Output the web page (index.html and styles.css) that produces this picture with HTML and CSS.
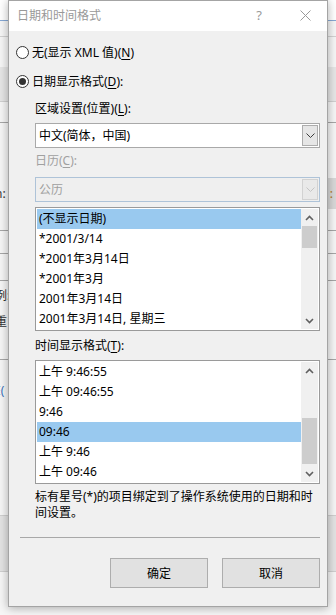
FILE: index.html
```html
<!DOCTYPE html>
<html lang="zh-CN">
<head>
<meta charset="utf-8">
<title>日期和时间格式</title>
<link rel="stylesheet" href="styles.css">
</head>
<body>
<div class="backdrop">
  <div class="bg-row bg-head"></div>
  <div class="bg-row bg-tabs"></div>
  <div class="bg-row bg-gap"></div>
  <div class="bg-row bg-band"></div>
  <div class="bg-row bg-r5"></div>
  <div class="bg-row bg-r6"></div>
  <div class="bg-row bg-r7"><span class="bg-glyph">n:</span><span class="bg-field">:</span></div>
  <div class="bg-row bg-r8"></div>
  <div class="bg-row bg-r9"></div>
  <div class="bg-row bg-r10"></div>
  <div class="bg-row bg-r11"><span class="bg-glyph bg-stack"><span>例:</span><span>重</span></span></div>
  <div class="bg-row bg-r12"><span class="bg-glyph bg-blue">E(</span></div>
  <div class="bg-row bg-band2"></div>
  <div class="bg-row bg-rest"></div>
</div>

<div class="dialog">
  <div class="titlebar">
    <span class="title-text">日期和时间格式</span>
    <span class="tb-help">?</span>
    <span class="tb-close">
      <svg width="11" height="11" viewBox="0 0 11 11"><path d="M0.5 0.5 L10.5 10.5 M10.5 0.5 L0.5 10.5" stroke="#9a9a9a" stroke-width="1" fill="none"/></svg>
    </span>
  </div>

  <div class="content">
    <div class="radio-row row-first">
      <span class="radio"></span>
      <span>无(显示 XML 值)(<u>N</u>)</span>
    </div>
    <div class="radio-row row-second">
      <span class="radio checked"><span class="dot"></span></span>
      <span>日期显示格式(<u>D</u>):</span>
    </div>

    <div class="group">
      <div class="label label-locale">区域设置(位置)(<u>L</u>):</div>
      <div class="combo">
        <span class="combo-text">中文(简体，中国)</span>
        <span class="combo-btn">
          <svg width="9" height="5" viewBox="0 0 9 5"><path d="M0.5 0.5 L4.5 4.5 L8.5 0.5" stroke="#3c3c3c" stroke-width="1" fill="none"/></svg>
        </span>
      </div>

      <div class="label label-disabled">日历(<u>C</u>):</div>
      <div class="combo combo-disabled">
        <span class="combo-text">公历</span>
        <span class="combo-btn">
          <svg width="9" height="5" viewBox="0 0 9 5"><path d="M0.5 0.5 L4.5 4.5 L8.5 0.5" stroke="#c4c4c4" stroke-width="1" fill="none"/></svg>
        </span>
      </div>

      <div class="list list-date">
        <div class="items">
          <div class="item selected">(不显示日期)</div>
          <div class="item">*2001/3/14</div>
          <div class="item">*2001年3月14日</div>
          <div class="item">*2001年3月</div>
          <div class="item">2001年3月14日</div>
          <div class="item">2001年3月14日, 星期三</div>
        </div>
        <div class="scrollbar">
          <span class="sb-arrow">
            <svg width="9" height="6" viewBox="0 0 9 6"><path d="M1 5 L4.5 1.5 L8 5" stroke="#606060" stroke-width="1.6" fill="none"/></svg>
          </span>
          <span class="sb-track"><span class="thumb thumb-date"></span></span>
          <span class="sb-arrow">
            <svg width="9" height="6" viewBox="0 0 9 6"><path d="M1 1 L4.5 4.5 L8 1" stroke="#606060" stroke-width="1.6" fill="none"/></svg>
          </span>
        </div>
      </div>

      <div class="label label-time">时间显示格式(<u>T</u>):</div>
      <div class="list list-time">
        <div class="items">
          <div class="item">上午 9:46:55</div>
          <div class="item">上午 09:46:55</div>
          <div class="item">9:46</div>
          <div class="item selected">09:46</div>
          <div class="item">上午 9:46</div>
          <div class="item">上午 09:46</div>
        </div>
        <div class="scrollbar">
          <span class="sb-arrow">
            <svg width="9" height="6" viewBox="0 0 9 6"><path d="M1 5 L4.5 1.5 L8 5" stroke="#606060" stroke-width="1.6" fill="none"/></svg>
          </span>
          <span class="sb-track"><span class="thumb thumb-time"></span></span>
          <span class="sb-arrow">
            <svg width="9" height="6" viewBox="0 0 9 6"><path d="M1 1 L4.5 4.5 L8 1" stroke="#606060" stroke-width="1.6" fill="none"/></svg>
          </span>
        </div>
      </div>

      <p class="note">标有星号(*)的项目绑定到了操作系统使用的日期和时间设置。</p>
    </div>

    <div class="separator"></div>

    <div class="buttons">
      <button class="btn" type="button">确定</button>
      <button class="btn" type="button">取消</button>
    </div>
  </div>
</div>
</body>
</html>
```

FILE: styles.css
```css
* { box-sizing: border-box; }

html, body { margin: 0; padding: 0; }

body {
  width: 336px;
  height: 615px;
  overflow: hidden;
  position: relative;
  background: #f6f6f6;
  font-family: "Noto Sans", "Noto Sans CJK SC", sans-serif;
  font-size: 12px;
  color: #000;
}

/* ---------- background window ---------- */
.backdrop {
  display: flex;
  flex-direction: column;
  height: 615px;
}
.bg-row {
  flex: none;
  display: flex;
  justify-content: space-between;
  align-items: center;
  background: #f6f6f6;
  font-size: 12px;
  line-height: 14px;
  color: #333;
}
.bg-head { height: 21px; background: #fff; border-bottom: 1px solid #86a8d4; }
.bg-tabs { height: 16px; border-bottom: 1px solid #d2d2d2; }
.bg-gap { height: 30px; }
.bg-band { height: 35px; background: #e6e6e6; border-bottom: 1px solid #d0d0d0; }
.bg-r5 { height: 21px; border-bottom: 1px solid #a6a6a6; }
.bg-r6 { height: 55px; }
.bg-r7 { height: 31px; align-items: stretch; }
.bg-r8 { height: 22px; border-bottom: 1px solid #a6a6a6; }
.bg-r9 { height: 23px; border-bottom: 1px solid #a6a6a6; }
.bg-r10 { height: 27px; border-bottom: 1px solid #a6a6a6; }
.bg-r11 { height: 79px; border-bottom: 1px solid #a6a6a6; align-items: flex-start; }
.bg-r12 { height: 155px; align-items: flex-start; }
.bg-band2 { height: 57px; background: #e3e3e3; border-top: 1px solid #cfcfcf; border-bottom: 1px solid #cfcfcf; }
.bg-rest { flex: 1; }

.bg-glyph { margin-left: -5px; align-self: center; }
.bg-stack { display: flex; flex-direction: column; gap: 12px; margin-top: 8px; align-self: flex-start; }
.bg-blue { color: #3a6fb8; margin-top: 24px; align-self: flex-start; margin-left: -6px; }
.bg-field {
  width: 20px;
  background: #d8d8d8;
  color: #b07a20;
  display: flex;
  align-items: center;
  justify-content: flex-end;
  padding-right: 3px;
}

/* ---------- dialog ---------- */
.dialog {
  position: absolute;
  left: 8px;
  top: 0;
  width: 320px;
  height: 607px;
  border: 1px solid #a4a4a4;
  background: #f0f0f0;
  box-shadow: 0 1px 9px rgba(0, 0, 0, 0.32);
  display: flex;
  flex-direction: column;
}

.titlebar {
  height: 30px;
  flex: none;
  background: #fff;
  display: flex;
  align-items: center;
  padding-left: 8px;
  color: #999;
  font-family: "Noto Sans CJK SC", sans-serif;
  font-size: 12px;
  line-height: 16px;
  padding-bottom: 2px;
}
.title-text { flex: 1; }
.tb-help {
  width: 30px;
  text-align: center;
  font-family: "Noto Sans", sans-serif;
  font-size: 13px;
  color: #9a9a9a;
  margin-right: 9px;
}
.tb-close {
  width: 44px;
  display: flex;
  justify-content: center;
  align-items: center;
}

.content {
  flex: 1;
  padding: 0 7px;
  display: flex;
  flex-direction: column;
}

.radio-row {
  display: flex;
  align-items: center;
  gap: 3px;
  height: 17px;
  line-height: 17px;
}
.row-first { margin-top: 13px; }
.row-second { margin-top: 12px; }

.radio {
  width: 13px;
  height: 13px;
  border: 1px solid #333;
  border-radius: 50%;
  background: #fff;
  display: flex;
  align-items: center;
  justify-content: center;
  flex: none;
}
.dot {
  width: 7px;
  height: 7px;
  border-radius: 50%;
  background: #333;
}

u { text-decoration: underline; text-underline-offset: 2px; }

.group {
  padding-left: 19px;
  display: flex;
  flex-direction: column;
}

.label { height: 17px; line-height: 17px; }
.label-locale { margin-top: 10px; }
.label-disabled { margin-top: 4px; color: #a0a0a0; }
.label-time { margin-top: 6px; }

.combo {
  margin-top: 6px;
  height: 25px;
  border: 1px solid #a9a9a9;
  background: #fff;
  display: flex;
  align-items: center;
  padding-left: 3px;
  line-height: 17px;
}
.combo-text { flex: 1; }
.combo-btn {
  width: 16px;
  height: 21px;
  margin-right: 1px;
  border: 1px solid #adadad;
  background: #e6e6e6;
  display: flex;
  align-items: center;
  justify-content: center;
}
.combo-disabled {
  margin-top: 8px;
  border-color: #aec3d8;
  background: #efefef;
  color: #9f9f9f;
}
.combo-disabled .combo-btn {
  background: #e9e9e9;
  border-color: #d2d2d2;
}

.list {
  margin-top: 5px;
  height: 124px;
  border: 1px solid #9a9a9a;
  background: #fff;
  padding: 1px;
  display: flex;
}
.list-time { margin-top: 6px; }

.items { flex: 1; display: flex; flex-direction: column; }
.item {
  height: 20px;
  line-height: 20px;
  padding-left: 2px;
  white-space: nowrap;
}
.item.selected { background: #99c9ef; }

.scrollbar {
  width: 17px;
  background: #f0f0f0;
  display: flex;
  flex-direction: column;
}
.sb-arrow {
  height: 17px;
  flex: none;
  display: flex;
  align-items: center;
  justify-content: center;
}
.sb-track { flex: 1; display: flex; flex-direction: column; padding: 0 1px; }
.thumb { background: #cdcdcd; display: block; }
.thumb-date { height: 22px; }
.thumb-time { margin-top: 39px; height: 46px; }

.note {
  margin: 5px 0 0;
  line-height: 16px;
}

.separator {
  margin: 16px 0 0 4px;
  height: 1px;
  background: #a8a8a8;
}

.buttons {
  margin-top: 20px;
  display: flex;
  justify-content: flex-end;
  gap: 14px;
}
.btn {
  width: 98px;
  height: 30px;
  border: 1px solid #adadad;
  background: #e1e1e1;
  font-family: "Noto Sans", "Noto Sans CJK SC", sans-serif;
  font-size: 12px;
  color: #000;
  padding: 0;
}
```
